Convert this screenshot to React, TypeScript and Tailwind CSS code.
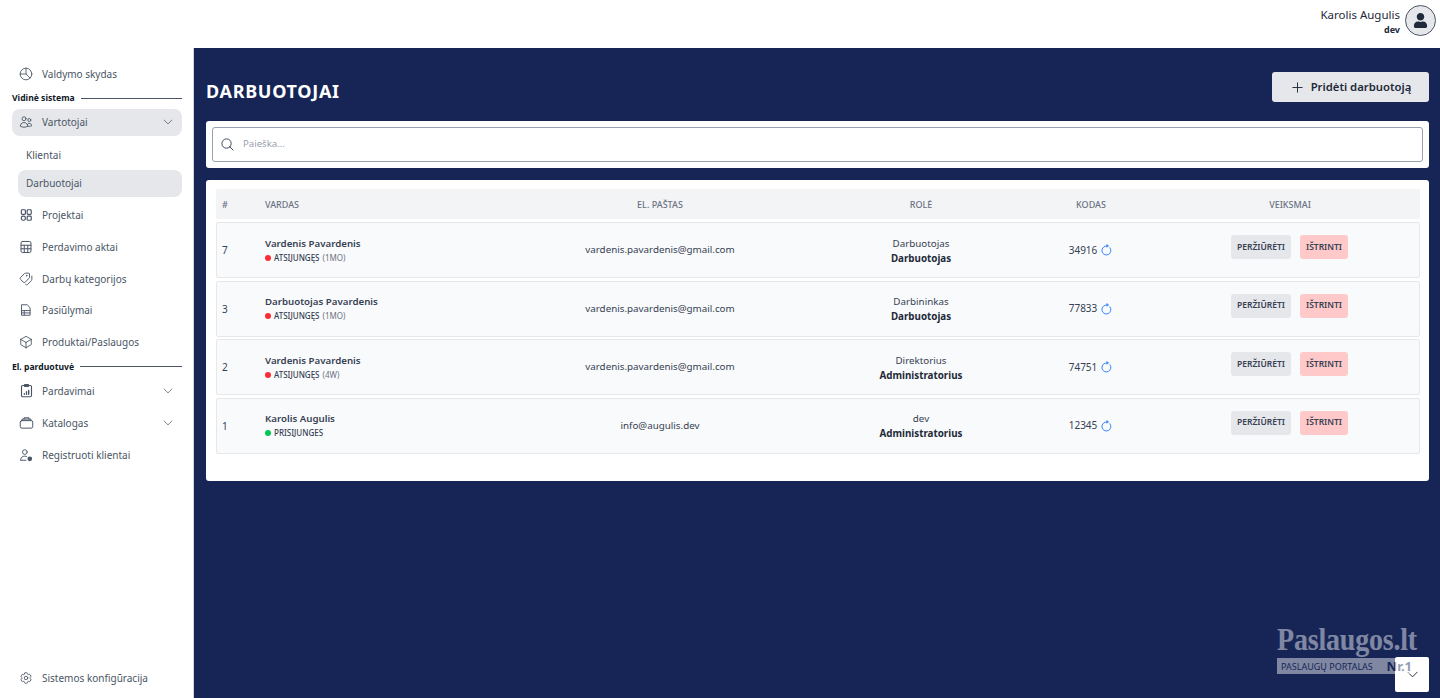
import React from "react";
import { HiOutlineUsers, HiOutlineCube, HiOutlineCog6Tooth, HiOutlineMagnifyingGlass, HiOutlineChevronDown, HiOutlinePlus } from "react-icons/hi2";
import { FaUser } from "react-icons/fa";
import { Tags } from "lucide-react";

const s = { fill: "none", stroke: "currentColor", strokeLinecap: "round", strokeLinejoin: "round" } as const;

const PieIcon = () => (
  <svg viewBox="0 0 24 24" {...s} strokeWidth="1.500" className="h-[14px] w-[14px]">
    <circle cx="12" cy="12" r="10" /><path d="M12 2v10l7 7M12 12H2" />
  </svg>
);
const GridIcon = () => (
  <svg viewBox="0 0 24 24" {...s} strokeWidth="2" className="h-[14px] w-[14px]">
    <rect x="4" y="3" width="7" height="8" rx="1.500" /><rect x="14" y="3" width="7" height="8" rx="1.500" />
    <rect x="4" y="14" width="7" height="7" rx="3" /><rect x="14" y="14" width="7" height="7" rx="1.500" />
  </svg>
);
const CalcIcon = () => (
  <svg viewBox="0 0 24 24" {...s} strokeWidth="1.700" className="h-[14px] w-[14px]">
    <rect x="3.500" y="2.500" width="17" height="19" rx="2.500" /><path d="M3.500 9h17M3.500 15h17M9 9v12.500M15 9v12.500" />
  </svg>
);
const DocIcon = () => (
  <svg viewBox="0 0 24 24" {...s} strokeWidth="1.600" className="h-[14px] w-[14px]">
    <path d="M5 3h9l5 5v13H5z" /><path d="M5 13h14M5 17h14M9 13v8" />
  </svg>
);
const ClipIcon = () => (
  <svg viewBox="0 0 24 24" {...s} strokeWidth="1.800" className="h-[15px] w-[15px]">
    <rect x="4" y="4" width="16" height="18" rx="2" /><path d="M9 2.500h6v3H9z" fill="currentColor" /><path d="M8.500 18v-1M12 18v-4M15.500 18v-6" strokeWidth="2.200" />
  </svg>
);
const CatalogIcon = () => (
  <svg viewBox="0 0 24 24" {...s} strokeWidth="1.600" className="h-[15px] w-[15px]">
    <rect x="2" y="9" width="20" height="12" rx="2.500" /><path d="M5 9V6.500h14V9M8 6.500V4.500h8v2" />
  </svg>
);
const UserCheckIcon = () => (
  <svg viewBox="0 0 24 24" {...s} strokeWidth="1.600" className="h-[14px] w-[14px]">
    <circle cx="10" cy="7" r="4" /><path d="M3 21v-1.500c0-3 3-5.500 7-5.500 1 0 2 .150 3 .500M3 21h9" />
    <circle cx="18.500" cy="18.500" r="4" fill="currentColor" stroke="none" />
  </svg>
);
const RefreshIcon = () => (
  <svg viewBox="0 0 24 24" {...s} strokeWidth="1.900" className="h-[12px] w-[12px] text-blue-500">
    <path d="M18 7.500A9 9 0 1 1 12 4" />
    <path d="M11.500 1.500v5l3.500-2.500z" fill="currentColor" strokeWidth="1" />
  </svg>
);

function NavItem({ icon, label, chevron, active }: { icon: React.ReactNode; label: string; chevron?: boolean; active?: boolean }) {
  return (
    <div className={`flex h-[27px] items-center rounded-lg pl-[7px] pr-2 ${active ? "bg-gray-200" : ""}`}>
      <span className="flex w-[23px] items-center text-gray-600">{icon}</span>
      <span className="flex-1 text-[10px] leading-none text-gray-600">{label}</span>
      {chevron && <HiOutlineChevronDown className="h-3 w-3 text-gray-600" />}
    </div>
  );
}

function Section({ label, className }: { label: string; className: string }) {
  return (
    <div className={`flex items-center gap-[6px] ${className}`}>
      <span className="text-[8.600px] font-bold leading-none text-gray-900">{label}</span>
      <span className="h-px flex-1 bg-gray-600" />
    </div>
  );
}

const ic = "h-[14px] w-[14px]";

function Sidebar() {
  return (
    <aside className="flex w-[194px] shrink-0 flex-col border-r border-gray-300 bg-white pl-3 pr-[11px] pt-3 pb-[7px]">
      <NavItem icon={<PieIcon />} label="Valdymo skydas" />
      <Section label="Vidinė sistema" className="mt-[7px]" />
      <div className="mt-[6px]"><NavItem active chevron icon={<HiOutlineUsers className={ic} />} label="Vartotojai" /></div>
      <div className="ml-[6px] mt-[6px] flex h-[27px] items-center rounded-lg pl-2 text-[10px] text-gray-600">Klientai</div>
      <div className="ml-[6px] mt-[1px] flex h-[27px] items-center rounded-lg bg-gray-200 pl-2 text-[10px] text-gray-600">Darbuotojai</div>
      <div className="mt-[5px] flex flex-col gap-[4.750px]">
        <NavItem icon={<GridIcon />} label="Projektai" />
        <NavItem icon={<CalcIcon />} label="Perdavimo aktai" />
        <NavItem icon={<Tags className={`${ic} -scale-x-100`} strokeWidth={1.6} />} label="Darbų kategorijos" />
        <NavItem icon={<DocIcon />} label="Pasiūlymai" />
        <NavItem icon={<HiOutlineCube className={ic} />} label="Produktai/Paslaugos" />
      </div>
      <Section label="El. parduotuvė" className="mt-[7px]" />
      <div className="mt-[6px] flex flex-col gap-[5px]">
        <NavItem chevron icon={<ClipIcon />} label="Pardavimai" />
        <NavItem chevron icon={<CatalogIcon />} label="Katalogas" />
        <NavItem icon={<UserCheckIcon />} label="Registruoti klientai" />
      </div>
      <div className="mt-auto"><NavItem icon={<HiOutlineCog6Tooth className={ic} />} label="Sistemos konfigūracija" /></div>
    </aside>
  );
}

const rows = [
  { id: 7, name: "Vardenis Pavardenis", online: false, ago: "(1MO)", email: "vardenis.pavardenis@gmail.com", pos: "Darbuotojas", role: "Darbuotojas", code: "34916" },
  { id: 3, name: "Darbuotojas Pavardenis", online: false, ago: "(1MO)", email: "vardenis.pavardenis@gmail.com", pos: "Darbininkas", role: "Darbuotojas", code: "77833" },
  { id: 2, name: "Vardenis Pavardenis", online: false, ago: "(4W)", email: "vardenis.pavardenis@gmail.com", pos: "Direktorius", role: "Administratorius", code: "74751" },
  { id: 1, name: "Karolis Augulis", online: true, ago: "", email: "info@augulis.dev", pos: "dev", role: "Administratorius", code: "12345" },
];

function Row({ r }: { r: (typeof rows)[number] }) {
  return (
    <div className="grid h-[56px] grid-cols-[41px_242px_320px_202px_138px_259px] items-center rounded-[2px] border border-gray-200 bg-gray-50 text-[9.800px] text-gray-700">
      <div className="pl-[5px] pt-[1px] text-[10px]">{r.id}</div>
      <div className="pl-[7px]">
        <div className="text-[9.700px] font-semibold leading-[14px] text-gray-700">{r.name}</div>
        <div className="mt-[1px] flex items-center gap-[3px] text-[8px] font-medium leading-[12px]">
          <span className={`h-[6px] w-[6px] rounded-full ${r.online ? "bg-green-500" : "bg-red-500"}`} />
          <span>{r.online ? "PRISIJUNGES" : "ATSIJUNGĘS"}</span>
          {r.ago && <span className="font-normal text-gray-500">{r.ago}</span>}
        </div>
      </div>
      <div className="pt-[1px] text-center">{r.email}</div>
      <div className="pt-[1px] text-center leading-[15px]">
        <div>{r.pos}</div>
        <div className="font-bold text-gray-800">{r.role}</div>
      </div>
      <div className="flex items-center justify-center gap-[4px] text-[10px]">
        <span>{r.code}</span>
        <RefreshIcon />
      </div>
      <div className="-mt-[6px] flex justify-center gap-[9px] text-[8.500px] font-semibold leading-none text-gray-700">
        <span className="flex h-[24px] w-[60px] items-center justify-center rounded-[3px] bg-gray-200">PERŽIŪRĖTI</span>
        <span className="flex h-[24px] w-[48px] items-center justify-center rounded-[3px] bg-red-200">IŠTRINTI</span>
      </div>
    </div>
  );
}

export default function App() {
  return (
    <div className="flex h-[698px] w-[1440px] flex-col overflow-hidden font-['Noto_Sans',sans-serif]">
      <header className="flex h-[48px] shrink-0 items-start justify-end bg-white pr-1 pt-[5px]">
        <div className="mr-[5px] pt-[1px] text-right">
          <div className="text-[11.500px] leading-[18px] text-gray-800">Karolis Augulis</div>
          <div className="text-[9px] font-bold leading-[11px] text-gray-800">dev</div>
        </div>
        <div className="flex h-[31px] w-[31px] items-center justify-center rounded-full border border-gray-600 bg-gray-200">
          <FaUser className="h-[15px] w-[15px] text-gray-800" />
        </div>
      </header>
      <div className="flex min-h-0 flex-1">
        <Sidebar />
        <main className="relative min-w-0 flex-1 bg-blue-950 pl-3 pr-[11px] pt-6">
          <div className="flex h-[49px] items-start justify-between">
            <h1 className="mt-[6px] text-[18px] font-bold leading-[26px] tracking-[0.7px] text-white">DARBUOTOJAI</h1>
            <button className="flex h-[30px] w-[157px] items-center justify-center gap-[6px] rounded-[3px] bg-gray-200 text-[11.300px] font-semibold text-gray-800">
              <HiOutlinePlus className="h-[15px] w-[15px]" />
              Pridėti darbuotoją
            </button>
          </div>
          <div className="rounded-[3px] bg-white p-[6px]">
            <div className="flex h-[35px] items-center gap-[8px] rounded-[3px] border border-gray-400 pl-[7px]">
              <HiOutlineMagnifyingGlass className="h-[15px] w-[15px] text-gray-700" />
              <span className="text-[9.600px] text-gray-400">Paieška...</span>
            </div>
          </div>
          <div className="mt-[12px] h-[301px] rounded-[3px] bg-white pl-[10px] pr-[9px] pt-[9px]">
            <div className="grid h-[30px] grid-cols-[42px_242px_320px_202px_138px_260px] items-center rounded-[2px] bg-gray-100 pt-[1px] text-[9px] font-medium text-gray-500">
              <div className="pl-[6px]">#</div>
              <div className="pl-[7px]">VARDAS</div>
              <div className="text-center">EL. PAŠTAS</div>
              <div className="text-center">ROLĖ</div>
              <div className="text-center">KODAS</div>
              <div className="text-center">VEIKSMAI</div>
            </div>
            <div className="mt-[3px] flex flex-col gap-[2.500px]">
              {rows.map((r) => <Row key={r.id} r={r} />)}
            </div>
          </div>
          <div className="absolute bottom-[6px] right-[11px] flex h-[35px] w-[34px] items-center justify-center rounded-[2px] bg-white">
            <HiOutlineChevronDown className="h-[15px] w-[15px] text-gray-800" />
          </div>
          <div className="absolute bottom-[24px] right-[26px] w-[137px] select-none opacity-45">
            <div className="origin-bottom scale-y-[1.15] whitespace-nowrap text-center font-['Liberation_Serif',serif] text-[28px] font-bold leading-[32px] tracking-[-0.2px] text-white">Paslaugos.lt</div>
            <div className="flex h-[16px] items-center justify-between whitespace-nowrap bg-white pl-[4px] pr-[2px] text-[9px] leading-none text-blue-950">
              <span>PASLAUGŲ PORTALAS</span>
              <span className="text-[13px] font-bold">Nr.1</span>
            </div>
          </div>
        </main>
      </div>
    </div>
  );
}
